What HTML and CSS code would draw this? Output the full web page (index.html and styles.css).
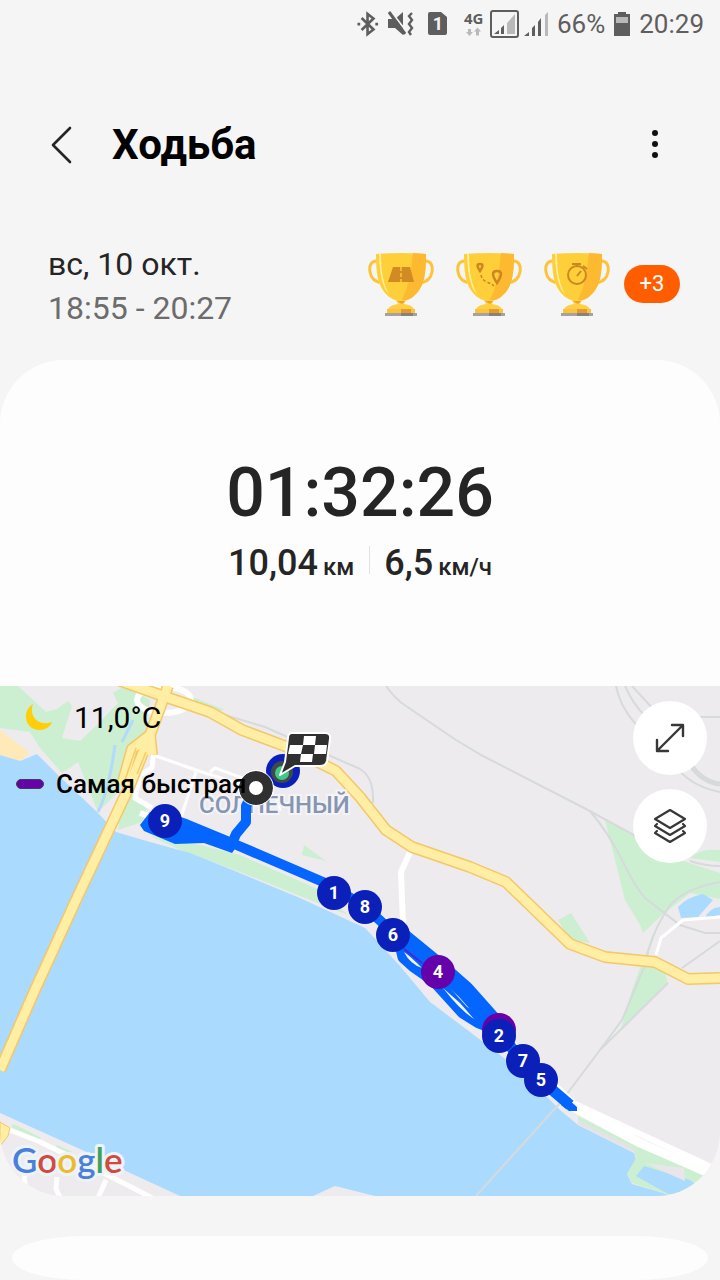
FILE: index.html
```html
<!DOCTYPE html>
<html lang="ru">
  <head>
    <meta charset="utf-8" />
    <meta name="viewport" content="width=device-width, initial-scale=1" />
    <title>Ходьба</title>
    <link rel="stylesheet" href="styles.css">
  </head>
  <body>
    <div class="status-bar">
      <!-- bluetooth -->
      <svg width="22" height="32" viewBox="357 8 24 32" fill="none" stroke="#5e5e5e" stroke-width="2.8">
        <path d="M362 17.500L375 30L368.500 35V13L375 18L362 30.500" />
        <path d="M357.500 24h3M377 24h3" stroke-width="3" />
      </svg>
      <!-- sound off, vibration on -->
      <svg width="28" height="32" viewBox="388 8 28 32">
        <path d="M389 19h7l8-7v23l-8-7h-7z" fill="#5e5e5e" />
        <path d="M391 10l16 21" stroke="#f5f5f5" stroke-width="2" />
        <path d="M390 12l16 22" stroke="#5e5e5e" stroke-width="3" />
        <path d="M413 13l-3 3 3 4-3 4 3 4-3 4 2 3" fill="none" stroke="#5e5e5e" stroke-width="2.400" />
      </svg>
      <svg width="32" height="32" viewBox="423 8 32 32">
        <path d="M430 12h11l6 5v16a2 2 0 0 1-2 2h-15a2 2 0 0 1-2-2V14a2 2 0 0 1 2-2z" fill="#5e5e5e" />
        <text class="sim-number" x="438" y="30" text-anchor="middle">1</text>
      </svg>
      <!-- network type and both signal levels -->
      <svg width="86" height="32" viewBox="463 8 86 32">
        <text class="network" x="464" y="24">4G</text>
        <path d="M468 29h3v3h2l-3.500 4-3.500-4h2zM476 35.500h3v-4h2l-3.500-4-3.500 4h2z" fill="#b9b9b9" />
        <rect x="491" y="11" width="27" height="26" rx="2" fill="none" stroke="#5e5e5e" stroke-width="2" />
        <path d="M507 34V23l8-9v20z" fill="#b9b9b9" />
        <path d="M494 34l5-4v4zM501 34v-6l3-3v9z" fill="#5e5e5e" />
        <path d="M524 36l5-4v4zM532 36v-8l3-3v11zM538 36V22l3-4v18z" fill="#5e5e5e" />
        <path d="M545 36V15l3-3v24z" fill="#b9b9b9" />
      </svg>
      <span>66%</span>
      <svg width="18" height="32" viewBox="613 8 18 32">
        <path d="M618 12h8v2h4v22h-16V14h4z" fill="#5e5e5e" />
        <path d="M616 17h12v6h-12z" fill="#b9b9b9" />
      </svg>
      <span>20:29</span>
    </div>

    <header class="top-bar">
      <button class="icon-button" type="button" aria-label="Назад">
        <svg width="24" height="40" viewBox="0 0 24 40" fill="none" stroke="#252525" stroke-width="2.600" stroke-linecap="round" stroke-linejoin="round">
          <path d="M20 3L3 20l17 17" />
        </svg>
      </button>
      <h1>Ходьба</h1>
      <button class="icon-button" type="button" aria-label="Ещё">
        <svg width="8" height="40" viewBox="0 0 8 40" fill="#111">
          <circle cx="5" cy="8" r="3" />
          <circle cx="5" cy="19" r="3" />
          <circle cx="5" cy="30" r="3" />
        </svg>
      </button>
    </header>

    <main>
      <section class="summary">
        <div class="dates">
          <p>вс, 10 окт.</p>
          <p class="hours">18:55 - 20:27</p>
        </div>
        <div class="awards">
          <svg class="trophy" viewBox="1 0 68 68">
            <g id="cup">
              <path d="M11 11C4 10 2 16 3 22c1 6 5 10 12 11M57 11c7-1 9 5 8 11-1 6-5 10-12 11" fill="none" stroke="#fcc33c" stroke-width="3" />
              <path d="M9 4q25-2 50 0c0 20-2 31-9 39q-7 8-16 8t-16-8C11 35 9 24 9 4z" fill="#ffcf39" />
              <path d="M46 3l13 1c0 20-2 31-9 39q-7 8-16 8 9-14 12-48z" fill="#fdb930" />
              <path d="M12 4h2q0 27 8 40-9-8-10-40z" fill="#fff0a0" />
              <path d="M29 50h10l-2 4q8 1 10 5H21q2-4 10-5z" fill="#ffcf45" />
              <path d="M30 51h8l-3 3z" fill="#e9a32b" />
              <path d="M20 59h28v5H20z" fill="#ffc33b" />
              <path d="M34 59h10v5H34z" fill="#e49b2b" />
              <path d="M18 63h32v3H18z" fill="#a3a3a5" />
              <path d="M34 63h12v3H34z" fill="#85827f" />
            </g>
            <path d="M26 17h17l4 15H21z" fill="#d08b22" />
            <path d="M34 17v15" stroke="#ffc93a" stroke-width="1.500" stroke-dasharray="4 2" />
          </svg>
          <svg class="trophy" viewBox="1 0 68 68">
            <use href="#cup" />
            <g fill="none" stroke="#cc8720">
              <path d="M25 21q-5-7 0-7t0 7zM42 33q-8-12 0-12t0 12z" stroke-width="2.500" />
              <path d="M26 25q1 5 6 7t7 4" stroke-width="1.500" stroke-dasharray="3 2" />
            </g>
          </svg>
          <svg class="trophy" viewBox="1 0 68 68">
            <use href="#cup" />
            <g fill="none" stroke="#cc8720" stroke-width="2">
              <circle cx="34" cy="25" r="9" />
              <path d="M29 14h9M40 16l4 3M34 26l4-5M34 14v3" />
            </g>
          </svg>
        </div>
        <span class="more">+3</span>
      </section>

      <section class="workout">
        <div class="totals">
          <p class="duration">01:32:26</p>
          <div class="details">
            <p>10,04 <small>км</small></p>
            <p>6,5 <small>км/ч</small></p>
          </div>
        </div>

        <div class="map">
          <svg class="map-canvas" viewBox="0 686 720 510" role="img" aria-label="Маршрут">
            <rect y="686" width="720" height="510" fill="#edebee" />

            <!-- parks and shore -->
            <g fill="#ccefd1">
              <path d="M0 686H18L46 712L57 709L68 701L72 706L62 738L80 741L98 724L118 703L113 693L124 686L150 700L144 740L120 790L98 812L78 762L62 773L40 748L30 732L0 728z" />
              <path d="M124 788L147 808L142 822L118 830zM150 836L200 845L240 855L320 890L348 915L300 896L235 870L185 852z" />
              <path d="M304 845L326 861L302 855z" />
              <path d="M605 820L633 834L665 855L720 873V899L690 893L662 915L643 933L640 925L625 900zM690 858Q700 848 720 850V862z" />
              <path d="M662 915L652 940L643 960L632 990L620 1032L668 983L662 965L648 955zM558 920L571 913L590 943L570 940z" />
              <path d="M180 692L225 710L210 712z" />
            </g>
            <path d="M0 730L30 753L20 761L0 755z" fill="#ffe9b8" />

            <!-- water -->
            <path d="M0 755L20 761L37 754L58 775L97 812L116 832L150 842L190 853L235 871L300 898L365 928L378 942L400 966L430 1002L470 1032L520 1070L560 1110L578 1125L634 1153L636 1160L627 1174L632 1184L660 1192L672 1196H375L335 1186L313 1196H180L128 1172L80 1149L0 1113z" fill="#abdaff" />
            <path d="M678 907Q687 897 703 894L713 900L698 917L681 918zM705 918Q709 908 720 907V915z" fill="#abdaff" />
            <path d="M115 745Q109 790 98 812M133 720L122 742" fill="none" stroke="#b3dafa" stroke-width="3" />
            <path d="M578 1116L634 1145L720 1180V1196H672L632 1183L627 1174L636 1158L634 1152L578 1121z" fill="#ccefd1" />
            <path d="M578 1122L634 1150" stroke="#e4e3e4" stroke-width="4" />
            <path d="M644 1166L690 1180L700 1188L694 1194L668 1194L636 1176z" fill="#abdaff" />
            <path d="M645 1163L684 1168L685 1181z" fill="#e8e6e9" />
            <path d="M12 1126L40 1140M56 1147L71 1154" stroke="#ccefd1" stroke-width="5" />

            <!-- rail and minor roads -->
            <g fill="none" stroke="#d6dadb" stroke-width="2">
              <path d="M386 686q10 14 20 20l50 34 27 16 103 53 48 26 36 25" />
              <path d="M225 715l40 12 95 42q14 8 13 34" />
              <path d="M590 811Q610 835 622 860T645 898L680 925L705 933H720" />
              <path d="M616 686q4 20 18 36l40 42q15 22 46 28M625 686q8 18 20 30M632 686l35 38M690 717h30" />
              <path d="M720 882Q678 890 667 910Q650 935 645 965L622 1020L600 1050L560 1103L476 1196" />
              <path d="M668 983L600 1050M682 968L720 941M690 861Q705 866 720 866" />
            </g>
            <path d="M690 764Q702 782 720 784" fill="none" stroke="#d6dadb" stroke-width="5" />
            <g fill="none" stroke="#fff" stroke-linejoin="round">
              <path d="M140 813l90 30 100 42 65 42 178 176 147 68" stroke-width="6" />
              <path d="M573 1107L640 1143L720 1178" stroke-width="9" />
              <path d="M411 850l-10 22 2 52" stroke-width="6" />
              <path d="M156 756l40 14 80 26 4 15M196 772l-15 45M210 772l5-4 50 18" stroke-width="3" />
              <path d="M154 750L152 768L140 775L135 798L152 808M0 1126l38 15 56 27 70 36M24 1174l2 20M57 1177l-1 12 4 8M106 1180l-8 18" stroke-width="5" />
              <path d="M656 955L661 938L683 920L720 917" stroke-width="3" />
              <ellipse cx="164" cy="700" rx="27" ry="13" stroke-width="6" />
            </g>

            <!-- highways -->
            <g fill="none" stroke="#f5c766" stroke-width="12" stroke-linejoin="round">
              <path d="M118 680l45 16 47 16 32 18 48 18 46 23 24 26 26 33 26 17 58 20 36 15 64 62 35 13 50 5 33 17 32-1" />
              <path d="M168 686L150 735L130 785L76 900L34 992L0 1070" />
              <path d="M150 735L132 749L122 785M150 735L152 755" />
            </g>
            <g fill="none" stroke="#ffeea3" stroke-width="9" stroke-linejoin="round">
              <path d="M118 680l45 16 47 16 32 18 48 18 46 23 24 26 26 33 26 17 58 20 36 15 64 62 35 13 50 5 33 17 32-1" />
              <path d="M168 686L150 735L130 785L76 900L34 992L0 1070" />
              <path d="M150 735L132 749L122 785M150 735L152 755" />
            </g>
            <path d="M136 748l-11 32M146 752l-9 22" stroke="#f5cb69" stroke-width="1.500" />
            <path d="M0 1122l10 6-2 8-8 10z" fill="#ffeea3" stroke="#f5c766" />

            <text class="district" x="199" y="813">СОЛНЕЧНЫЙ</text>

            <!-- walked route -->
            <g fill="none" stroke="#0466ff" stroke-linejoin="round">
              <path d="M165 817L186 824L232 843L330 885L365 907L394 933" stroke-width="10" />
              <path d="M231 846L236 834L246 822V806L252 795" stroke-width="10" />
              <path d="M396 932L440 968L465 990L497 1026" stroke-width="18" />
              <path d="M401 944L404 957L414 966L434 980L463 1012L479 1022L497 1029" stroke-width="13" />
              <path d="M499 1033l24 28 20 21 27 23" stroke-width="11" />
            </g>
            <path d="M140 825L150 812L182 819L240 842L232 853L204 843L175 844L144 831z" fill="#0466ff" />
            <path d="M568 1099l9 8v4h-8l-8-6z" fill="#0466ff" />
            <path d="M404 952Q410 956 422 968Q410 964 404 952zM443 988L460 1003L474 1019Q460 1010 443 988z" fill="#f3f6ff" />
            <path d="M404 949l18 14" stroke="#4329d8" stroke-width="2" />

            <circle cx="283" cy="771" r="17" fill="#0b20b8" />
            <circle cx="282" cy="772" r="11" fill="#41484b" />
            <circle cx="282" cy="773" r="7" fill="#42c884" />
            <path d="M292 733h33q6 0 5 6l-3 22q-1 5-7 5h-25l-15 9 5-13 3-24q0-5 4-5z" fill="#303030" stroke="#fff" stroke-width="2" stroke-linejoin="round" />
            <path d="M304 736h12l-1 9h-12zM290 745h13l-2 9h-13zM315 745h12l-1 9h-12zM301 754h12l-1 8h-12z" fill="#fff" />
            <circle cx="256" cy="788" r="12" fill="#fff" stroke="#303030" stroke-width="10" />
            <circle cx="256" cy="788" r="17.500" fill="none" stroke="#fff" stroke-width="1" />

            <g class="markers">
              <circle cx="165" cy="821" r="17" /><text x="165" y="827">9</text>
              <circle cx="334" cy="893" r="17" /><text x="334" y="899">1</text>
              <circle cx="365" cy="907" r="17" /><text x="365" y="913">8</text>
              <circle cx="393" cy="935" r="17" /><text x="393" y="941">6</text>
              <circle class="fastest" cx="438" cy="972" r="17" /><text x="438" y="978">4</text>
              <circle class="fastest" cx="499" cy="1030" r="17" />
              <circle cx="499" cy="1036" r="17" /><text x="499" y="1042">2</text>
              <circle cx="523" cy="1061" r="17" /><text x="523" y="1067">7</text>
              <circle cx="541" cy="1080" r="17" /><text x="541" y="1086">5</text>
            </g>

            <text class="google" x="12" y="1173"><tspan fill="#4a80dc">G</tspan><tspan fill="#cf4a40">o</tspan><tspan fill="#eabb2d">o</tspan><tspan fill="#4a80dc">g</tspan><tspan fill="#43a05c">l</tspan><tspan fill="#cf4a40">e</tspan></text>
          </svg>

          <div class="map-info">
            <p class="weather">
              <svg width="30" height="30" viewBox="0 0 30 30">
                <path d="M9 1C-1 7 0 22 10 26c8 3 16-1 18-7C16 24 4 14 9 1z" fill="#ffce08" />
              </svg>
              11,0°C
            </p>
            <p class="legend"><span class="swatch"></span>Самая быстрая</p>
          </div>

          <div class="map-buttons">
            <button type="button" aria-label="Развернуть">
              <svg width="40" height="40" viewBox="0 0 40 40" fill="none" stroke="#373737" stroke-width="2.400" stroke-linecap="round" stroke-linejoin="round">
                <path d="M7 33L33 7M22 7h11v11M7 22v11h11" />
              </svg>
            </button>
            <button type="button" aria-label="Слои карты">
              <svg width="40" height="40" viewBox="0 0 40 40" fill="none" stroke="#373737" stroke-width="2.200" stroke-linejoin="round" stroke-linecap="round">
                <path d="M20 4l15 9-15 9-15-9zM7 18l-2 2 15 9 15-9-2-2M7 25l-2 2 15 9 15-9-2-2" />
              </svg>
            </button>
          </div>
        </div>
      </section>

      <section class="next-card"></section>
    </main>
  </body>
</html>
```

FILE: styles.css
```css
* {
  box-sizing: border-box;
}

body {
  margin: 0;
  background-color: #f5f5f5;
  color: #252525;
  font-family: Roboto, "Noto Sans", sans-serif;
}

h1, p {
  margin: 0;
}

svg {
  display: block;
  flex-shrink: 0;
}

button {
  display: flex;
  align-items: center;
  justify-content: center;
  padding: 0;
  border: 0;
  background: none;
  cursor: pointer;
}

.status-bar {
  display: flex;
  align-items: center;
  justify-content: flex-end;
  gap: 8px;
  height: 48px;
  padding-right: 16px;
  color: #5e5e5e;
  font-size: 26px;
}

.sim-number {
  fill: #f5f5f5;
  font-size: 18px;
  font-weight: 700;
}

.network {
  fill: #5e5e5e;
  font-family: "Open Sans", sans-serif;
  font-size: 15px;
  font-weight: 700;
}

/* title */
.top-bar {
  display: flex;
  align-items: center;
  height: 194px;
  padding: 0 36px 0 32px;
}

.icon-button {
  width: 60px;
  height: 60px;
}

.top-bar h1 {
  flex: 1;
  padding-left: 20px;
  color: #000;
  font-size: 42px;
  line-height: 50px;
}

/* date and awards */
.summary {
  display: flex;
  align-items: center;
  gap: 12px;
  height: 84px;
  margin-bottom: 34px;
  padding: 0 40px 0 48px;
}

.dates {
  flex: 1;
  padding-top: 4px;
  font-size: 32px;
  line-height: 44px;
}

.hours {
  color: #6c6c6c;
}

.awards {
  display: flex;
  gap: 20px;
}

.trophy {
  width: 68px;
  height: 68px;
}

.more {
  width: 56px;
  border-radius: 20px;
  background-color: #ff5d00;
  color: #fff;
  font-size: 22px;
  line-height: 38px;
  text-align: center;
}

/* workout card */
.workout {
  overflow: hidden;
  border-radius: 64px;
  background-color: #fdfdfd;
}

.totals {
  padding: 93px 0;
  text-align: center;
}

.duration {
  font-size: 68px;
  font-weight: 500;
  line-height: 80px;
}

.details {
  display: flex;
  justify-content: center;
  font-size: 36px;
  font-weight: 500;
  line-height: 60px;
}

.details p {
  display: flex;
  align-items: baseline;
  gap: 5px;
  padding: 0 15px;
}

.details p + p {
  background: linear-gradient(#e2e2e2, #e2e2e2) 0 40% / 1px 28px no-repeat;
}

.details small {
  font-size: 24px;
  line-height: 1;
}

/* map */
.map {
  position: relative;
}

.map-canvas {
  width: 100%;
  height: auto;
}

.district {
  fill: #8796b0;
  stroke: #f4f4f8;
  stroke-width: 4px;
  paint-order: stroke;
  font-size: 24px;
  font-weight: 500;
}

.markers {
  fill: #0b20b8;
}

.markers .fastest {
  fill: #6602a9;
}

.markers text {
  fill: #fff;
  font-size: 18px;
  font-weight: 700;
  text-anchor: middle;
}

.google {
  stroke: #eef3f8;
  stroke-width: 6px;
  stroke-linejoin: round;
  paint-order: stroke;
  font-family: Lato, sans-serif;
  font-size: 35px;
  font-weight: 600;
}

.map-info {
  position: absolute;
  top: 10px;
  left: 16px;
  color: #000;
}

.weather {
  display: flex;
  align-items: center;
  gap: 20px;
  padding-left: 8px;
  font-size: 30px;
  line-height: 44px;
}

.legend {
  display: flex;
  align-items: center;
  gap: 12px;
  margin-top: 22px;
  font-size: 26px;
  font-weight: 500;
  line-height: 44px;
}

.swatch {
  width: 28px;
  height: 10px;
  border: 1px solid #414141;
  border-radius: 5px;
  background-color: #6602a9;
}

.map-buttons {
  position: absolute;
  top: 15px;
  right: 13px;
  display: flex;
  flex-direction: column;
  gap: 14px;
}

.map-buttons button {
  width: 74px;
  height: 74px;
  border-radius: 50%;
  background-color: #fff;
}

.next-card {
  height: 44px;
  margin: 40px 12px 0;
  border-radius: 72px / 22px;
  background-color: #fdfdfd;
}
```
